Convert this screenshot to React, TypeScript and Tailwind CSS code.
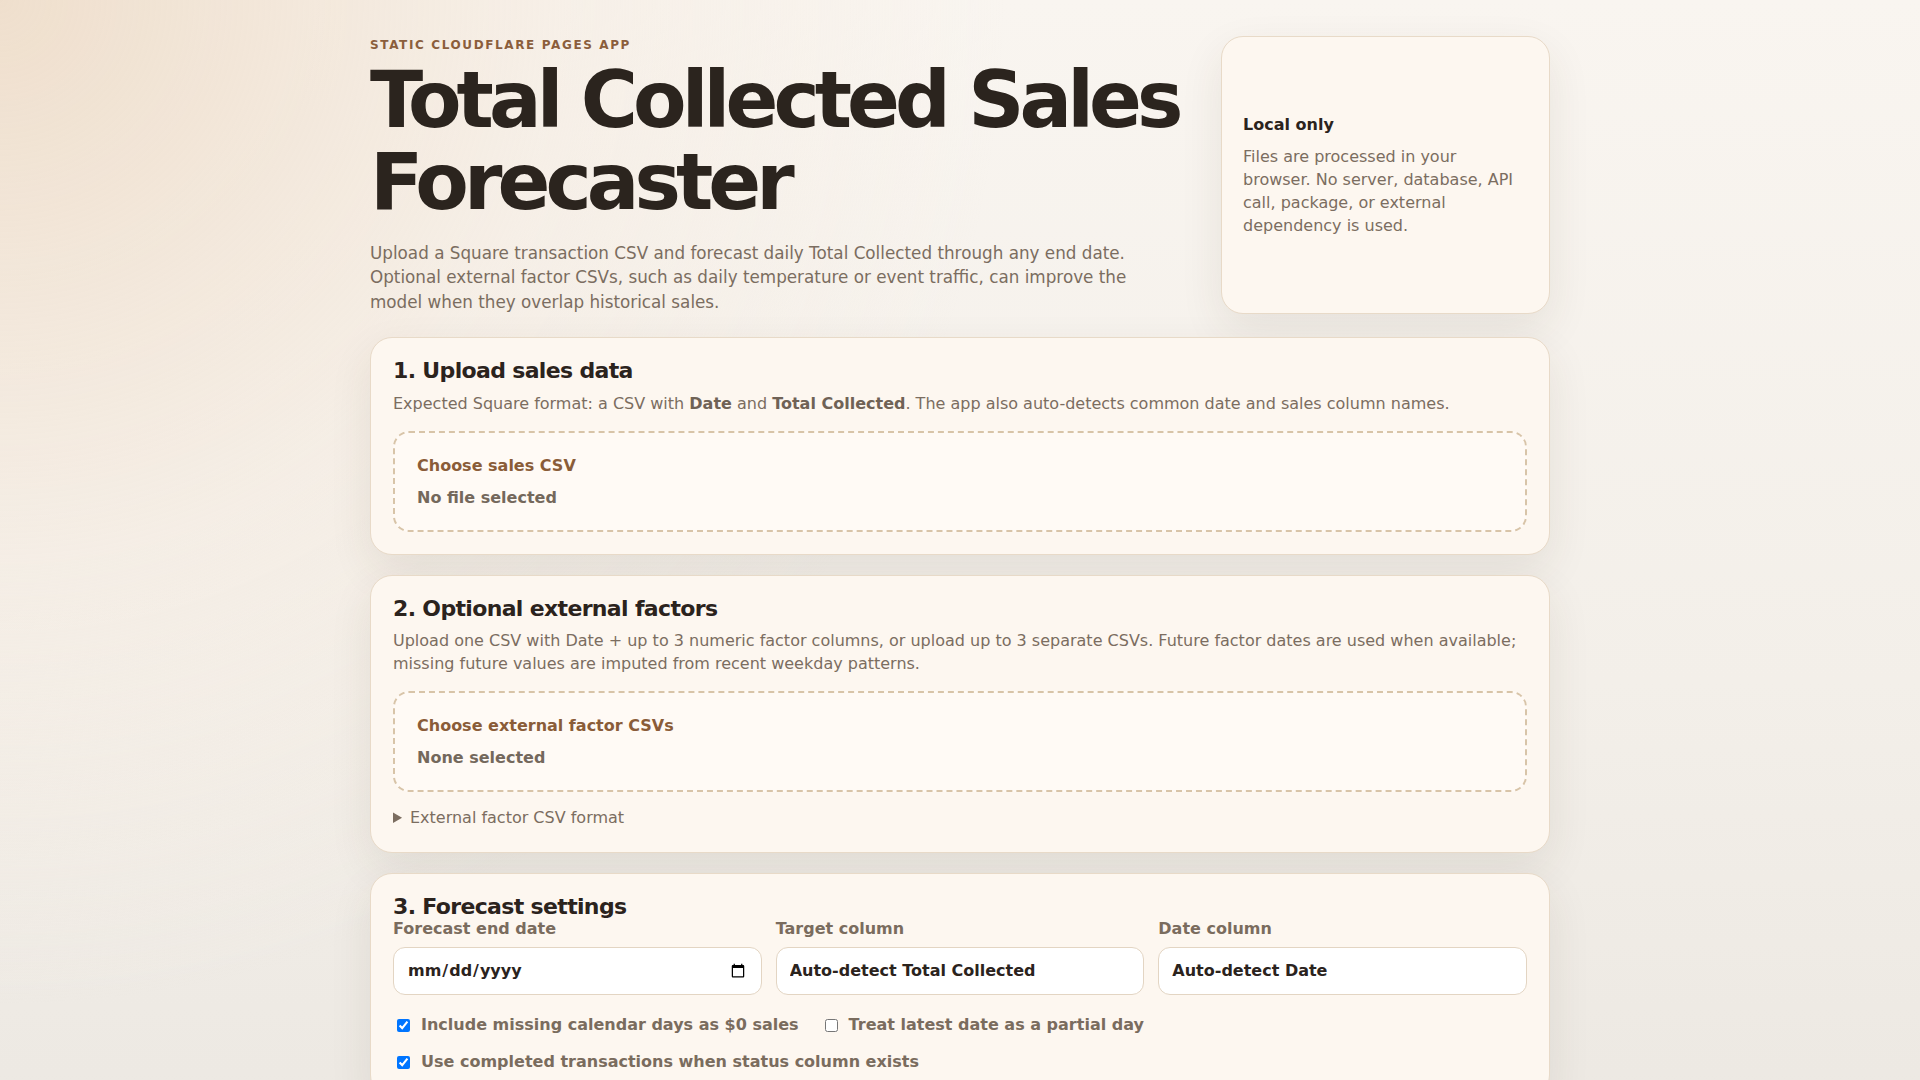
import React from 'react';

function Card({ title, children }: { title: string; children?: React.ReactNode }) {
  return (
    <section className="rounded-[22px] border border-[#e8dac8] bg-[#fdf7f0] px-[22px] pb-[22px] pt-5 shadow-[0_16px_44px_rgba(70,50,30,0.09)]">
      <h2 className="text-[22px] font-bold leading-[1.15] tracking-[-0.03em] text-[#2b231d]">{title}</h2>
      {children}
    </section>
  );
}

function DropZone({ label, status }: { label: string; status: string }) {
  return (
    <div className="mt-4 rounded-2xl border-2 border-dashed border-[#d8c4a8] bg-[#fffaf5] px-[22px] pb-5 pt-[21px]">
      <div className="text-[16px] font-bold leading-[1.5] text-[#8a5c38]">{label}</div>
      <div className="mt-2 text-[16px] font-bold leading-[1.5] text-[#74685c]">{status}</div>
    </div>
  );
}

function Field({ label, children }: { label: string; children: React.ReactNode }) {
  return (
    <label className="grid gap-[9px]">
      <span className="text-[16px] font-bold leading-[1.2] text-[#7a6c5e]">{label}</span>
      {children}
    </label>
  );
}

function Check({ label, checked }: { label: string; checked?: boolean }) {
  return (
    <label className="flex items-center gap-2 text-[16px] font-bold leading-[1.5] text-[#7a6c5e]">
      <input type="checkbox" defaultChecked={checked} className="m-[3px_3px_3px_4px] h-[13px] w-[13px]" />
      {label}
    </label>
  );
}

export default function App() {
  return (
    <div className="min-h-screen bg-[radial-gradient(circle_at_0%_0%,#efdfcd_0%,rgba(245,236,226,0.6)_25%,rgba(248,244,239,0)_45%),linear-gradient(180deg,#f9f5f0_0%,#f3efe9_60%,#ece8e2_100%)] font-['DejaVu_Sans',sans-serif]">
      <main className="mx-auto max-w-[1180px] pb-10 pt-9">
        <header className="mb-[23px] grid grid-cols-[minmax(0,1fr)_329px] gap-[30px]">
          <div>
            <p className="text-[12px] font-bold uppercase leading-[1.5] tracking-[0.135em] text-[#8b5e3c]">
              Static Cloudflare Pages App
            </p>
            <h1 className="mt-[6px] text-[78px] font-bold leading-[1.05] tracking-[-0.063em] text-[#2b241e]">
              Total Collected Sales Forecaster
            </h1>
            <p className="mt-[17px] max-w-[780px] text-[16.8px] leading-[1.46] text-[#7b6d60]">
              Upload a Square transaction CSV and forecast daily Total Collected through any end date. Optional
              external factor CSVs, such as daily temperature or event traffic, can improve the model when they
              overlap historical sales.
            </p>
          </div>
          <aside className="flex flex-col justify-center rounded-[22px] border border-[#e8dac8] bg-[#fdf7f0] pl-[21px] pr-[22px] shadow-[0_16px_44px_rgba(70,50,30,0.09)]">
            <h3 className="text-[16px] font-bold leading-[1.5] text-[#2b231d]">Local only</h3>
            <p className="mt-2 text-[16px] leading-[1.45] text-[#7b6d60]">
              Files are processed in your browser. No server, database, API call, package, or external dependency
              is used.
            </p>
          </aside>
        </header>

        <div className="flex flex-col gap-5">
          <Card title="1. Upload sales data">
            <p className="mt-2 text-[16px] leading-[1.45] text-[#7b6d60]">
              Expected Square format: a CSV with <b className="text-[#6f6256]">Date</b> and{' '}
              <b className="text-[#6f6256]">Total Collected</b>. The app also auto-detects common date and sales column
              names.
            </p>
            <DropZone label="Choose sales CSV" status="No file selected" />
          </Card>

          <Card title="2. Optional external factors">
            <p className="mt-2 text-[16px] leading-[1.45] text-[#7b6d60]">
              Upload one CSV with Date + up to 3 numeric factor columns, or upload up to 3 separate CSVs. Future factor
              dates are used when available; missing future values are imputed from recent weekday patterns.
            </p>
            <DropZone label="Choose external factor CSVs" status="None selected" />
            <details className="mt-[14px] text-[16px] leading-[1.45] text-[#7b6d60]">
              <summary className="cursor-pointer">External factor CSV format</summary>
            </details>
          </Card>

          <Card title="3. Forecast settings">
            <div className="grid grid-cols-3 gap-[14px]">
              <Field label="Forecast end date">
                <input
                  type="date"
                  className="h-[48px] rounded-xl border border-[#e3d5c3] bg-white px-[13px] text-[16px] font-bold text-[#2b231d] outline-none"
                />
              </Field>
              <Field label="Target column">
                <select className="h-[48px] appearance-none rounded-xl border border-[#e3d5c3] bg-white px-[13px] text-[16px] font-bold text-[#2b231d] outline-none">
                  <option>Auto-detect Total Collected</option>
                </select>
              </Field>
              <Field label="Date column">
                <select className="h-[48px] appearance-none rounded-xl border border-[#e3d5c3] bg-white px-[13px] text-[16px] font-bold text-[#2b231d] outline-none">
                  <option>Auto-detect Date</option>
                </select>
              </Field>
            </div>
            <div className="mt-[18px] flex flex-col gap-[13px]">
              <div className="flex flex-wrap gap-[22px]">
                <Check label="Include missing calendar days as $0 sales" checked />
                <Check label="Treat latest date as a partial day" />
              </div>
              <Check label="Use completed transactions when status column exists" checked />
            </div>
          </Card>
        </div>
      </main>
    </div>
  );
}
